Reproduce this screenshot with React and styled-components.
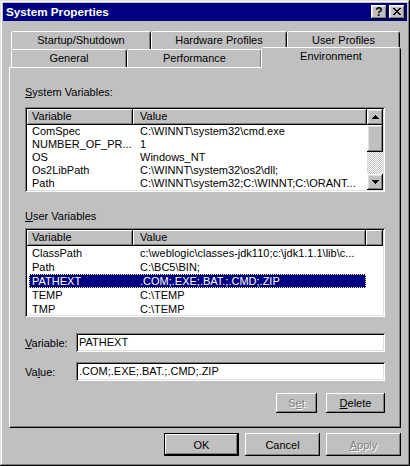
import styled, { createGlobalStyle, css } from "styled-components";

const GlobalStyle = createGlobalStyle`
  * { box-sizing: border-box; }
  body {
    margin: 0;
    background: #c0c0c0;
    font-family: "Liberation Sans", Arial, sans-serif;
    font-size: 11px;
    color: #000;
  }
`;

const raised = css`
  background: #c0c0c0;
  box-shadow: inset -1px -1px #000, inset 1px 1px #fff, inset -2px -2px #808080,
    inset 2px 2px #dfdfdf;
`;

const sunken = css`
  box-shadow: inset 1px 1px #808080, inset -1px -1px #fff, inset 2px 2px #000,
    inset -2px -2px #dfdfdf;
`;

const systemVars = [
  ["ComSpec", "C:\\WINNT\\system32\\cmd.exe"],
  ["NUMBER_OF_PR...", "1"],
  ["OS", "Windows_NT"],
  ["Os2LibPath", "C:\\WINNT\\system32\\os2\\dll;"],
  ["Path", "C:\\WINNT\\system32;C:\\WINNT;C:\\ORANT..."],
];

const userVars = [
  ["ClassPath", "c:\\weblogic\\classes-jdk110;c:\\jdk1.1.1\\lib\\c..."],
  ["Path", "C:\\BC5\\BIN;"],
  ["PATHEXT", ".COM;.EXE;.BAT.;.CMD;.ZIP"],
  ["TEMP", "C:\\TEMP"],
  ["TMP", "C:\\TEMP"],
];

const UpArrow = () => (
  <svg width="7" height="4" viewBox="0 0 7 4" shapeRendering="crispEdges">
    <path d="M3 0h1v1H3z M2 1h3v1H2z M1 2h5v1H1z M0 3h7v1H0z" fill="#000" />
  </svg>
);

const DownArrow = () => (
  <svg width="7" height="4" viewBox="0 0 7 4" shapeRendering="crispEdges">
    <path d="M0 0h7v1H0z M1 1h5v1H1z M2 2h3v1H2z M3 3h1v1H3z" fill="#000" />
  </svg>
);

const CloseGlyph = () => (
  <svg width="8" height="7" viewBox="0 0 8 7" shapeRendering="crispEdges">
    <path
      d="M0 0h2v1H0z M6 0h2v1H6z M1 1h2v1H1z M5 1h2v1H5z M2 2h4v1H2z M3 3h2v1H3z M2 4h4v1H2z M1 5h2v1H1z M5 5h2v1H5z M0 6h2v1H0z M6 6h2v1H6z"
      fill="#000"
    />
  </svg>
);

const App = () => {
  return (
    <>
      <GlobalStyle />
      <Window>
        <TitleBar>
          <Title>System Properties</Title>
          <CaptionButtons>
            <CaptionButton>
              <HelpMark>?</HelpMark>
            </CaptionButton>
            <CaptionButton>
              <CloseGlyph />
            </CaptionButton>
          </CaptionButtons>
        </TitleBar>
        <Client>
          <TabRow>
            <Tab $w={140}>Startup/Shutdown</Tab>
            <Tab $w={136}>Hardware Profiles</Tab>
            <Tab $w={113}>User Profiles</Tab>
          </TabRow>
          <TabRow>
            <Tab $w={116}>General</Tab>
            <Tab $w={135}>Performance</Tab>
            <Tab $w={140} $active>
              Environment
            </Tab>
          </TabRow>
          <Panel>
            <GroupLabel $after={8}>
              <u>S</u>ystem Variables:
            </GroupLabel>
            <ListView $h={85}>
              <ListBody>
                <Header>
                  <HeaderCell $w={106} $pad={5}>Variable</HeaderCell>
                  <HeaderCell $w={234} $pad={7}>Value</HeaderCell>
                </Header>
                {systemVars.map(([name, value]) => (
                  <Row key={name} $rowH={13}>
                    <NameCell>{name}</NameCell>
                    <ValueCell>{value}</ValueCell>
                  </Row>
                ))}
              </ListBody>
              <ScrollBar>
                <ScrollButton>
                  <UpArrow />
                </ScrollButton>
                <Thumb />
                <Track />
                <ScrollButton>
                  <DownArrow />
                </ScrollButton>
              </ScrollBar>
            </ListView>

            <GroupLabel $before={18} $after={5}>
              <u>U</u>ser Variables
            </GroupLabel>
            <ListView $h={89}>
              <ListBody>
                <Header>
                  <HeaderCell $w={106} $pad={5}>Variable</HeaderCell>
                  <HeaderCell $w={233} $pad={7}>Value</HeaderCell>
                  <HeaderCell $w={16} />
                </Header>
                {userVars.map(([name, value]) => (
                  <Row key={name} $rowH={14} $selected={name === "PATHEXT"}>
                    <NameCell>{name}</NameCell>
                    <ValueCell>{value}</ValueCell>
                  </Row>
                ))}
              </ListBody>
            </ListView>

            <FieldRow $before={16}>
              <FieldLabel>
                <u>V</u>ariable:
              </FieldLabel>
              <TextBox>PATHEXT</TextBox>
            </FieldRow>
            <FieldRow $before={10}>
              <FieldLabel>
                Va<u>l</u>ue:
              </FieldLabel>
              <TextBox>.COM;.EXE;.BAT.;.CMD;.ZIP</TextBox>
            </FieldRow>

            <PanelButtons>
              <PushButton $w={41} $h={20} $disabled>
                S<u>e</u>t
              </PushButton>
              <PushButton $w={59} $h={20}>
                <u>D</u>elete
              </PushButton>
            </PanelButtons>
          </Panel>
          <DialogButtons>
            <PushButton $w={75} $h={23} $default>
              OK
            </PushButton>
            <PushButton $w={75} $h={23}>
              Cancel
            </PushButton>
            <PushButton $w={75} $h={23} $disabled>
              <u>A</u>pply
            </PushButton>
          </DialogButtons>
        </Client>
      </Window>
    </>
  );
};

const Window = styled.div`
  width: 410px;
  height: 466px;
  padding: 3px;
  background: #c0c0c0;
  box-shadow: inset -1px -1px #000, inset 1px 1px #dfdfdf, inset -2px -2px #808080,
    inset 2px 2px #fff;
  overflow: hidden;
`;

const TitleBar = styled.div`
  height: 18px;
  background: #000080;
  display: flex;
  align-items: center;
  justify-content: space-between;
  padding: 0 2px 0 3px;
`;

const Title = styled.div`
  color: #fff;
  font-weight: bold;
  font-size: 11.7px;
  line-height: 18px;
`;

const CaptionButtons = styled.div`
  display: flex;
  gap: 2px;
`;

const CaptionButton = styled.div`
  ${raised};
  width: 16px;
  height: 14px;
  display: flex;
  align-items: center;
  justify-content: center;
  padding-bottom: 1px;
`;

const HelpMark = styled.span`
  font-weight: bold;
  font-size: 12px;
  line-height: 12px;
`;

const Client = styled.div`
  padding: 10px 3px 0 6px;
`;

const TabRow = styled.div`
  display: flex;
  height: 18px;
  padding-left: 2px;
`;

const Tab = styled.div`
  width: ${(p) => p.$w}px;
  height: 18px;
  background: #c0c0c0;
  border-top: 1px solid #fff;
  border-left: 1px solid #fff;
  border-right: 1px solid #000;
  box-shadow: inset -1px 0 #808080;
  clip-path: polygon(2px 0, calc(100% - 2px) 0, 100% 2px, 100% 100%, 0 100%, 0 2px);
  text-align: center;
  line-height: 17px;
  white-space: nowrap;
  ${(p) =>
    p.$active &&
    css`
      position: relative;
      z-index: 1;
      height: 21px;
      margin-top: -2px;
      margin-left: -1px;
      line-height: 16px;
    `}
`;

const Panel = styled.div`
  width: 392px;
  height: 361px;
  background: #c0c0c0;
  border-top: 1px solid #fff;
  border-left: 1px solid #fff;
  border-right: 1px solid #000;
  border-bottom: 1px solid #000;
  box-shadow: inset -1px -1px #808080;
  padding: 18px 15px 0 15px;
`;

const GroupLabel = styled.div`
  line-height: 13px;
  height: 13px;
  margin-top: ${(p) => p.$before || 0}px;
  margin-bottom: ${(p) => p.$after || 0}px;
`;

const ListView = styled.div`
  ${sunken};
  background: #fff;
  height: ${(p) => p.$h}px;
  padding: 2px;
  display: flex;
  overflow: hidden;
`;

const ListBody = styled.div`
  flex: 1;
  overflow: hidden;
`;

const Header = styled.div`
  display: flex;
  height: 16px;
`;

const HeaderCell = styled.div`
  ${raised};
  box-shadow: inset -1px -1px #000, inset 1px 1px #fff, inset -2px -2px #808080;
  width: ${(p) => p.$w}px;
  flex: ${(p) => (p.$w === 16 ? 1 : "none")};
  height: 16px;
  line-height: 15px;
  padding-left: ${(p) => p.$pad || 0}px;
  white-space: nowrap;
`;

const Row = styled.div`
  display: flex;
  width: 337px;
  height: ${(p) => p.$rowH}px;
  line-height: ${(p) => p.$rowH}px;
  margin-left: 2px;
  white-space: nowrap;
  ${(p) =>
    p.$selected &&
    css`
      background: #000080;
      color: #fff;
      outline: 1px dotted #ffff80;
      outline-offset: -1px;
    `}
`;

const NameCell = styled.div`
  width: 104px;
  padding-left: 3px;
  overflow: hidden;
`;

const ValueCell = styled.div`
  flex: 1;
  padding-left: 7px;
  overflow: hidden;
`;

const ScrollBar = styled.div`
  width: 16px;
  display: flex;
  flex-direction: column;
`;

const ScrollButton = styled.div`
  ${raised};
  height: 16px;
  flex: none;
  display: flex;
  align-items: center;
  justify-content: center;
`;

const Thumb = styled.div`
  ${raised};
  height: 27px;
  flex: none;
`;

const Track = styled.div`
  flex: 1;
  background-color: #c0c0c0;
  background-image: conic-gradient(#fff 25%, #c0c0c0 0 50%, #fff 0 75%, #c0c0c0 0);
  background-size: 2px 2px;
`;

const FieldRow = styled.div`
  display: flex;
  align-items: center;
  margin-top: ${(p) => p.$before}px;
`;

const FieldLabel = styled.div`
  width: 51px;
  flex: none;
`;

const TextBox = styled.div`
  ${sunken};
  flex: 1;
  height: 19px;
  background: #fff;
  padding: 0 3px;
  line-height: 19px;
  white-space: nowrap;
`;

const PanelButtons = styled.div`
  display: flex;
  justify-content: flex-end;
  gap: 9px;
  margin-top: 12px;
`;

const PushButton = styled.div`
  ${raised};
  box-shadow: inset -1px -1px #000, inset 1px 1px #fff, inset -2px -2px #808080;
  width: ${(p) => p.$w}px;
  height: ${(p) => p.$h}px;
  display: flex;
  align-items: center;
  justify-content: center;
  ${(p) =>
    p.$default &&
    css`
      border: 1px solid #000;
    `}
  ${(p) =>
    p.$disabled &&
    css`
      color: #808080;
      text-shadow: 1px 1px #fff;
    `}
`;

const DialogButtons = styled.div`
  display: flex;
  justify-content: flex-end;
  gap: 6px;
  margin-top: 5px;
  width: 392px;
`;

export default App;
